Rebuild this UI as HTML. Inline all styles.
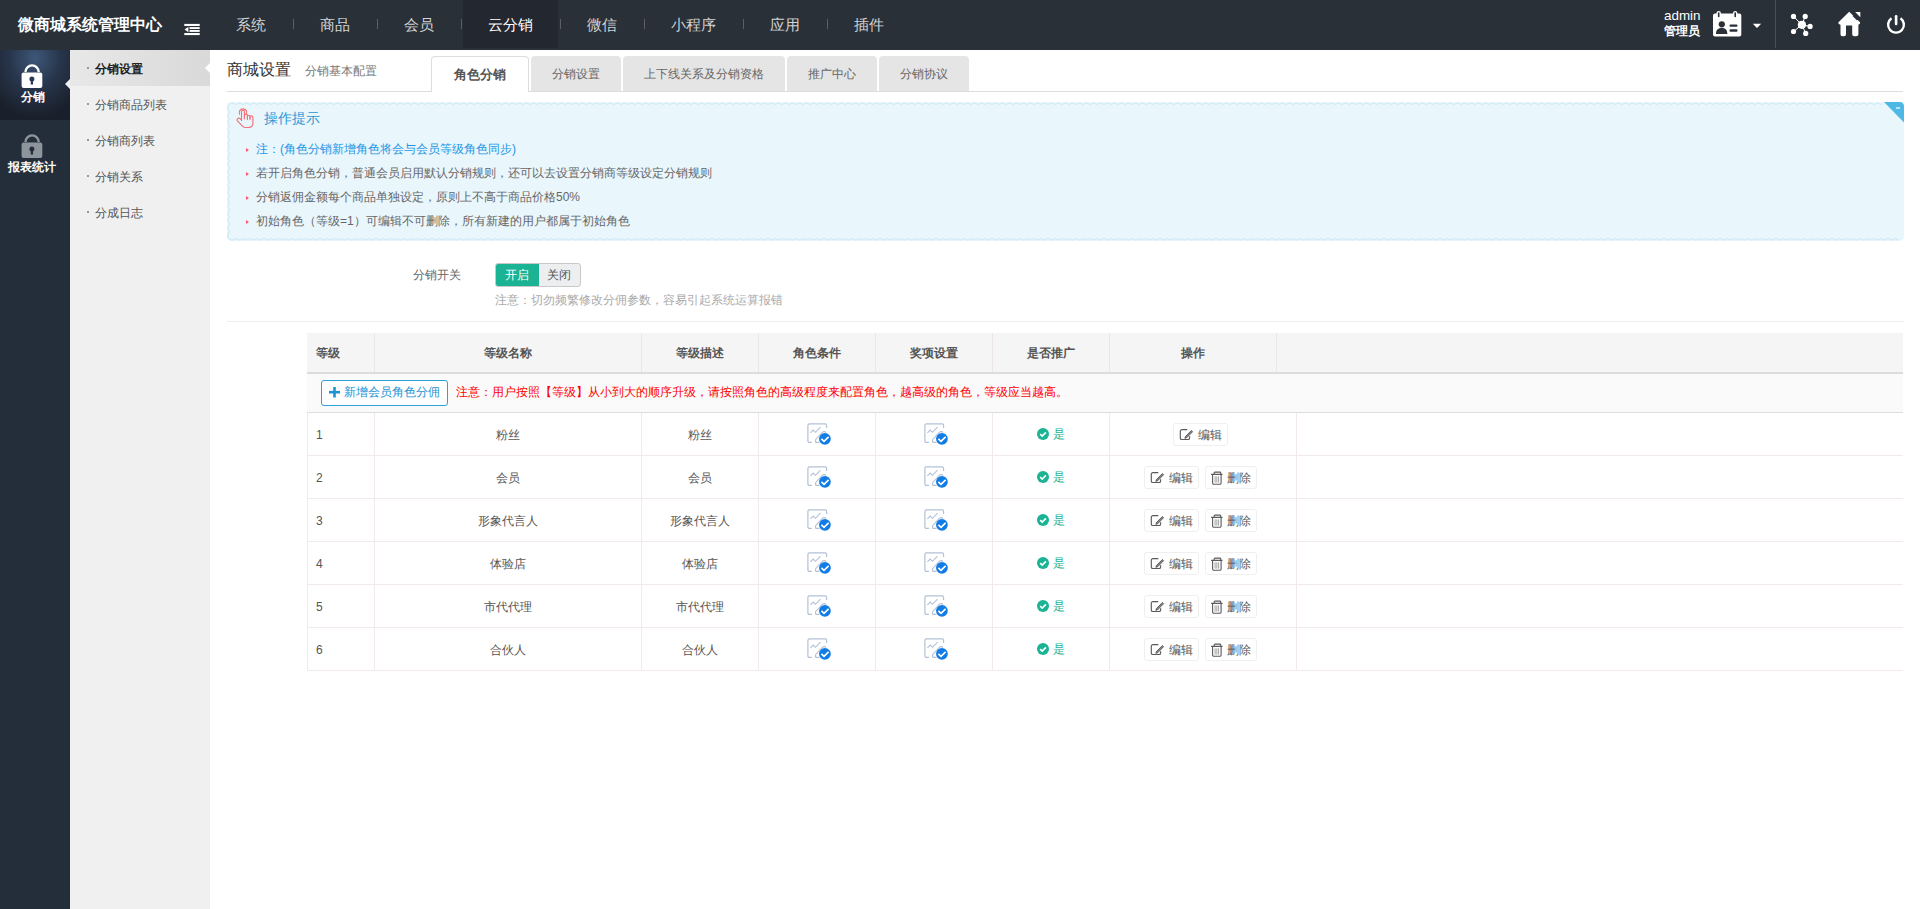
<!DOCTYPE html>
<html><head><meta charset="utf-8">
<style>
*{box-sizing:border-box;margin:0;padding:0}
html,body{width:1920px;height:909px;overflow:hidden;background:#fff;font-family:"Liberation Sans",sans-serif;font-size:12px;color:#555}
.abs{position:absolute}
#top{position:absolute;left:0;top:0;width:1920px;height:50px;background:#293038}
#logo{position:absolute;left:18px;top:14px;font-size:16px;font-weight:bold;color:#fff;line-height:22px;white-space:nowrap}
.nav{position:absolute;top:0;height:50px;line-height:50px;font-size:15px;color:#d2d3d5;text-align:center;padding-right:2px}
.sep{position:absolute;top:19px;width:1px;height:10px;background:#5a5f66}
#side{position:absolute;left:0;top:50px;width:70px;height:859px;background:#242e3b}
#sub{position:absolute;left:70px;top:50px;width:140px;height:859px;background:#f0f0f0}
.si{position:absolute;left:25px;height:36px;line-height:38px;font-size:12px;color:#555;white-space:nowrap}
.dot{position:absolute;left:87px;width:2px;height:2px;background:#999}

.tab{position:absolute;top:56px;height:35px;line-height:37px;font-size:12px;color:#666;background:#e5e5e5;border-radius:4px 4px 0 0;text-align:center;white-space:nowrap}
.tip{position:absolute;left:256px;font-size:12px;line-height:24px;color:#666;white-space:nowrap}
.tri{position:absolute;left:246px;width:0;height:0;border-top:2px solid transparent;border-bottom:2px solid transparent;margin-top:1px;border-left:3px solid #f4606e}
.th{position:absolute;top:333px;height:40px;line-height:40px;font-size:12px;font-weight:bold;color:#555;text-align:center}
.vl{position:absolute;width:1px;background:#f2eaea}
.hl{position:absolute;left:307px;width:1596px;height:1px;background:#f2eaea}
.td{position:absolute;height:43px;line-height:45px;font-size:12px;color:#555;text-align:center;white-space:nowrap}
.btn{position:absolute;height:23px;line-height:21px;border:1px solid #efefef;border-radius:3px;background:#fff;font-size:12px;color:#555;white-space:nowrap}
</style></head><body>
<div id="top">
  <div id="logo">微商城系统管理中心</div>
  <svg class="abs" style="left:184px;top:23px" width="17" height="13" viewBox="0 0 17 13"><rect x="0.3" y="0.9" width="15.4" height="2.1" fill="#fff"/><rect x="5.5" y="4.1" width="10.2" height="1.9" fill="#fff"/><rect x="5.5" y="7" width="10.2" height="1.9" fill="#fff"/><rect x="0.3" y="10" width="15.4" height="2.1" fill="#fff"/><path d="M0.6 6.5 L4.4 3.8 V9.2 Z" fill="#fff"/></svg>
  <div class="abs" style="left:463px;top:0;width:95px;height:48px;background:#232730"></div>
  <div class="nav" style="left:210px;width:83px">系统</div><div class="sep" style="left:293px"></div>
  <div class="nav" style="left:294px;width:83px">商品</div><div class="sep" style="left:377px"></div>
  <div class="nav" style="left:378px;width:83px">会员</div><div class="sep" style="left:461px"></div>
  <div class="nav" style="left:462px;width:98px;color:#fff">云分销</div><div class="sep" style="left:560px"></div>
  <div class="nav" style="left:561px;width:83px">微信</div><div class="sep" style="left:644px"></div>
  <div class="nav" style="left:645px;width:98px">小程序</div><div class="sep" style="left:743px"></div>
  <div class="nav" style="left:744px;width:83px">应用</div><div class="sep" style="left:827px"></div>
  <div class="nav" style="left:828px;width:83px">插件</div>
  <!-- right -->
  <div class="abs" style="left:1664px;top:7px;font-size:13.4px;color:#fff;line-height:17px">admin</div>
  <div class="abs" style="left:1664px;top:23px;font-size:12px;font-weight:bold;color:#fff;line-height:16px">管理员</div>
  <div class="abs" style="left:1775px;top:0;width:1px;height:48px;background:#4a4f57"></div>
  <svg class="abs" style="left:1712px;top:10px" width="30" height="28" viewBox="0 0 30 28">
    <rect x="1" y="3.5" width="28.3" height="23" rx="2" fill="#fff"/>
    <rect x="4.5" y="0.9" width="4.4" height="7.5" rx="2.2" fill="#fff"/><rect x="5.9" y="2.2" width="1.6" height="5" rx=".8" fill="#293038"/>
    <rect x="21" y="0.9" width="4.4" height="7.5" rx="2.2" fill="#fff"/><rect x="22.4" y="2.2" width="1.6" height="5" rx=".8" fill="#293038"/>
    <circle cx="9.8" cy="14.3" r="3.1" fill="#293038"/>
    <path d="M4 23.9 C4 19.5 6.5 18 9.8 18 C13 18 15.3 19.5 15.3 23.9 Z" fill="#293038"/>
    <rect x="17.5" y="14.4" width="8" height="2.3" rx="1" fill="#293038"/><rect x="17.5" y="19.2" width="8" height="2.5" rx="1" fill="#293038"/>
  </svg>
  <svg class="abs" style="left:1752px;top:23px" width="10" height="6" viewBox="0 0 10 6"><path d="M0.8 0.7 H9.2 L5 5 Z" fill="#fff"/></svg>
  <svg class="abs" style="left:1788px;top:12px" width="26" height="26" viewBox="1788 12 26 26">
    <g stroke="#fff" stroke-width="1"><line x1="1801.9" y1="24.8" x2="1793.5" y2="16.4"/><line x1="1801.9" y1="24.8" x2="1805.2" y2="16.4"/><line x1="1801.9" y1="24.8" x2="1810" y2="26.4"/><line x1="1801.9" y1="24.8" x2="1793.5" y2="31.5"/><line x1="1801.9" y1="24.8" x2="1805.7" y2="33.4"/></g>
    <g fill="#fff"><circle cx="1801.9" cy="24.8" r="4.1"/><circle cx="1793.5" cy="16.4" r="2.6"/><circle cx="1805.2" cy="16.4" r="2.6"/><circle cx="1810.1" cy="26.4" r="2.6"/><circle cx="1793.5" cy="31.5" r="2.6"/><circle cx="1805.7" cy="33.4" r="2.6"/></g>
  </svg>
  <svg class="abs" style="left:1836px;top:10px" width="28" height="28" viewBox="1836 10 28 28">
    <path d="M1849.2 11.8 L1860 22.2 Q1861 23.5 1858.4 24.8 V34.6 Q1858.4 36.2 1856.2 36.2 H1854.3 Q1852.2 36.2 1852.2 34.6 V25.6 H1846 V34.6 Q1846 36.2 1844 36.2 H1842.5 Q1840.5 36.2 1840.5 34.6 V24.8 Q1837.5 23.5 1838.5 22.2 Z" fill="#fff"/>
    <path d="M1855.2 12.1 H1860.3 V17.2 Z" fill="#fff"/>
    <line x1="1853" y1="15.5" x2="1857.5" y2="20" stroke="#293038" stroke-width="1.2"/>
  </svg>
  <svg class="abs" style="left:1884px;top:12px" width="24" height="26" viewBox="1884 12 24 26">
    <path d="M1891.5 18.2 A7.9 7.9 0 1 0 1900.5 18.2" fill="none" stroke="#fff" stroke-width="2.4"/>
    <rect x="1894.8" y="15" width="2.6" height="10.3" rx="1.2" fill="#fff"/>
  </svg>
</div>
<div id="side">
  <div class="abs" style="left:0;top:0;width:70px;height:70px;background:radial-gradient(ellipse 52px 60px at 35px 8px,#3e5778 0%,#27354b 50%,#1a202b 100%)"></div>
  <svg class="abs" style="left:21px;top:13px" width="23" height="26" viewBox="0 0 23 26"><path d="M4.5 9 A6.6 6.6 0 0 1 17.7 9" fill="none" stroke="#fff" stroke-width="2.3"/><rect x="0.6" y="9.6" width="20.7" height="15.4" rx="2" fill="#fff"/><circle cx="10.9" cy="15.9" r="2.5" fill="#2a3a52"/><path d="M9.9 16.5 H11.9 L12.1 21.5 H9.7 Z" fill="#2a3a52"/></svg>
  <div class="abs" style="left:1px;top:39px;width:64px;text-align:center;font-size:12px;font-weight:bold;color:#fff;line-height:16px">分销</div>
  <div class="abs" style="left:65px;top:29px;width:0;height:0;border-top:5px solid transparent;border-bottom:5px solid transparent;border-right:5px solid #f0f0f0"></div>
  <svg class="abs" style="left:21px;top:83px" width="23" height="26" viewBox="0 0 23 26"><path d="M4.5 9 A6.6 6.6 0 0 1 17.7 9" fill="none" stroke="#8e949b" stroke-width="2.3"/><rect x="0.6" y="9.6" width="20.7" height="15.4" rx="2" fill="#8e949b"/><circle cx="10.9" cy="15.9" r="2.5" fill="#242e3b"/><path d="M9.9 16.5 H11.9 L12.1 21.5 H9.7 Z" fill="#242e3b"/></svg>
  <div class="abs" style="left:0;top:109px;width:64px;text-align:center;font-size:12px;font-weight:bold;color:#fff;line-height:16px">报表统计</div>
</div>
<div id="sub">
  <div class="abs" style="left:0;top:0;width:140px;height:36px;background:linear-gradient(90deg,#e8e8e8,#d9d9d9)"></div>
  <div class="si" style="top:0;font-weight:bold;color:#222">分销设置</div>
  <div class="si" style="top:36px">分销商品列表</div>
  <div class="si" style="top:72px">分销商列表</div>
  <div class="si" style="top:108px">分销关系</div>
  <div class="si" style="top:144px">分成日志</div>
  <div class="dot" style="left:17px;top:17px"></div><div class="dot" style="left:17px;top:53px"></div><div class="dot" style="left:17px;top:89px"></div><div class="dot" style="left:17px;top:125px"></div><div class="dot" style="left:17px;top:161px"></div>
  <div class="abs" style="left:135px;top:13px;width:0;height:0;border-top:5px solid transparent;border-bottom:5px solid transparent;border-right:5px solid #fff"></div>
</div>

<div id="content">
  <div class="abs" style="left:227px;top:60px;font-size:16px;color:#333;line-height:20px;white-space:nowrap">商城设置</div>
  <div class="abs" style="left:305px;top:63px;font-size:12px;color:#777;line-height:16px;white-space:nowrap">分销基本配置</div>
  <div class="abs" style="left:227px;top:91px;width:1676px;height:1px;background:#ddd"></div>
  <div class="tab" style="left:431px;width:98px;background:#fff;border:1px solid #ddd;border-bottom:none;height:36px;font-size:13px;font-weight:bold;color:#555;line-height:36px">角色分销</div>
  <div class="tab" style="left:531px;width:90px">分销设置</div>
  <div class="tab" style="left:623px;width:162px">上下线关系及分销资格</div>
  <div class="tab" style="left:787px;width:90px">推广中心</div>
  <div class="tab" style="left:879px;width:90px">分销协议</div>

  <svg class="abs" style="left:227px;top:102px" width="1677" height="139" viewBox="0 0 1677 139">
  <defs>
   <pattern id="wt" x="2" y="0" width="7" height="4" patternUnits="userSpaceOnUse"><path d="M0 2.8 Q3.5 -0.6 7 2.8" fill="none" stroke="#d2ebf7" stroke-width="1.3"/></pattern>
   <pattern id="wb" x="2" y="135" width="7" height="4" patternUnits="userSpaceOnUse"><path d="M0 1.2 Q3.5 4.6 7 1.2" fill="none" stroke="#d2ebf7" stroke-width="1.3"/></pattern>
   <pattern id="wl" x="0" y="3" width="4" height="7" patternUnits="userSpaceOnUse"><path d="M2.8 0 Q-0.6 3.5 2.8 7" fill="none" stroke="#d2ebf7" stroke-width="1.3"/></pattern>
  </defs>
  <rect x="0" y="0" width="1677" height="139" rx="5" fill="#e9f6fc"/>
  <rect x="5" y="0" width="1650" height="4" fill="url(#wt)"/>
  <rect x="5" y="135" width="1667" height="4" fill="url(#wb)"/>
  <rect x="0" y="5" width="4" height="129" fill="url(#wl)"/>
  <path d="M0.7 6 Q0.7 0.7 6 0.7" fill="none" stroke="#d2ebf7" stroke-width="1.3"/>
  <path d="M0.7 133 Q0.7 138.3 6 138.3" fill="none" stroke="#d2ebf7" stroke-width="1.3"/>
</svg>
  <svg class="abs" style="left:1884px;top:102px" width="20" height="21" viewBox="0 0 20 21"><path d="M0 0 H15.5 Q20 0 20 4.5 V20.5 Z" fill="#4fb9e6"/><rect x="12" y="5.4" width="4" height="1.2" fill="#fff"/></svg>
  <svg class="abs" style="left:234px;top:105px" width="22" height="25" viewBox="234 105 22 25"><g fill="none" stroke="#f4707a" stroke-width="1.15" stroke-linecap="round" stroke-linejoin="round">
<path d="M239.6 114.3 A3.8 3.8 0 1 1 246.4 114.3"/>
<path d="M241.5 120.5 V111.6 A1.45 1.45 0 0 1 244.4 111.6 V119"/>
<path d="M244.4 116 V115.6 A1.5 1.5 0 0 1 247.4 115.6 V119.4"/>
<path d="M247.4 117 V116.5 A1.3 1.3 0 0 1 250 116.5 V119.6"/>
<path d="M250 118 V117.2 A1.45 1.45 0 0 1 252.9 117.2 V123.3 Q252.9 127.3 248.6 127.5 H246 Q244 127.5 242.7 126.3 L237.4 120.9 Q236.6 119.7 237.6 118.6 Q238.8 117.6 240.2 118.6 L241.5 120"/>
</g></svg>
  <div class="abs" style="left:264px;top:108px;font-size:14px;color:#2b97d4;line-height:20px">操作提示</div>
  <div class="tri" style="top:147px"></div><div class="tip" style="top:137px;color:#1d96e6">注：(角色分销新增角色将会与会员等级角色同步)</div>
  <div class="tri" style="top:171px"></div><div class="tip" style="top:161px">若开启角色分销，普通会员启用默认分销规则，还可以去设置分销商等级设定分销规则</div>
  <div class="tri" style="top:195px"></div><div class="tip" style="top:185px">分销返佣金额每个商品单独设定，原则上不高于商品价格50%</div>
  <div class="tri" style="top:219px"></div><div class="tip" style="top:209px">初始角色（等级=1）可编辑不可删除，所有新建的用户都属于初始角色</div>

  <div class="abs" style="left:413px;top:267px;font-size:12px;color:#666;line-height:16px">分销开关</div>
  <div class="abs" style="left:495px;top:263px;width:86px;height:24px;border:1px solid #c9c9c9;border-radius:3px;background:#eceef0;overflow:hidden">
    <div class="abs" style="left:-1px;top:-1px;width:44px;height:24px;background:#1ab394;border-radius:3px 0 0 3px"></div>
  </div>
  <div class="abs" style="left:505px;top:267px;font-size:12px;color:#fff;line-height:16px">开启</div>
  <div class="abs" style="left:547px;top:267px;font-size:12px;color:#555;line-height:16px">关闭</div>
  <div class="abs" style="left:495px;top:292px;font-size:12px;color:#aaa;line-height:16px;white-space:nowrap">注意：切勿频繁修改分佣参数，容易引起系统运算报错</div>
  <div class="abs" style="left:227px;top:321px;width:1677px;height:1px;background:#eee"></div>
<div class="abs" style="left:307px;top:333px;width:1596px;height:40px;background:#f5f5f5"></div>
<div class="abs" style="left:307px;top:372px;width:1596px;height:2px;background:#dcdcdc"></div>
<div class="vl" style="left:374px;top:333px;height:39px;background:#ede6e6"></div>
<div class="vl" style="left:641px;top:333px;height:39px;background:#ede6e6"></div>
<div class="vl" style="left:758px;top:333px;height:39px;background:#ede6e6"></div>
<div class="vl" style="left:875px;top:333px;height:39px;background:#ede6e6"></div>
<div class="vl" style="left:992px;top:333px;height:39px;background:#ede6e6"></div>
<div class="vl" style="left:1109px;top:333px;height:39px;background:#ede6e6"></div>
<div class="vl" style="left:1276px;top:333px;height:39px;background:#ede6e6"></div>
<div class="th" style="left:316px;text-align:left">等级</div>
<div class="th" style="left:375px;width:266px">等级名称</div>
<div class="th" style="left:642px;width:116px">等级描述</div>
<div class="th" style="left:759px;width:116px">角色条件</div>
<div class="th" style="left:876px;width:116px">奖项设置</div>
<div class="th" style="left:993px;width:116px">是否推广</div>
<div class="th" style="left:1110px;width:166px">操作</div>
<div class="abs" style="left:307px;top:374px;width:1596px;height:38px;background:#fafafa"></div>
<div class="abs" style="left:307px;top:412px;width:1596px;height:1px;background:#ddd"></div>
<div class="abs" style="left:321px;top:380px;width:127px;height:26px;border:1px solid #29a3d8;border-radius:3px;background:#fff"></div>
<svg class="abs" style="left:329px;top:387px" width="11" height="11" viewBox="0 0 11 11"><rect x="4.2" y="0" width="2.6" height="10.5" fill="#1d93d2"/><rect x="0" y="3.9" width="11" height="2.6" fill="#1d93d2"/></svg>
<div class="abs" style="left:344px;top:384px;font-size:12px;color:#1d93d2;line-height:16px;white-space:nowrap">新增会员角色分佣</div>
<div class="abs" style="left:456px;top:384px;font-size:12px;color:#f00;line-height:16px;white-space:nowrap">注意：用户按照【等级】从小到大的顺序升级，请按照角色的高级程度来配置角色，越高级的角色，等级应当越高。</div>
<div class="hl" style="top:455px"></div>
<div class="td" style="left:316px;top:413px;text-align:left">1</div>
<div class="td" style="left:375px;top:413px;width:266px">粉丝</div>
<div class="td" style="left:642px;top:413px;width:116px">粉丝</div>
<svg class="abs" style="left:803px;top:419px" width="28" height="26" viewBox="0 0 28 26"><path d="M23.6 8.9 V6.4 A1.5 1.5 0 0 0 22.1 4.9 H6.4 A1.5 1.5 0 0 0 4.9 6.4 V21.9 A1.5 1.5 0 0 0 6.4 23.4 H8.9" fill="none" stroke="#b3c1d6" stroke-width="1.2"/><path d="M7.4 13.8 L10.2 11 L12.5 13.3 L17.5 8.2" fill="none" stroke="#b3c1d6" stroke-width="1.1"/><path d="M12.6 23.4 V20.6 L19.5 13.2 A2.4 2.4 0 0 1 23 13.6 M12.6 23.4 H16.5" fill="none" stroke="#b3c1d6" stroke-width="1.1"/><circle cx="21.9" cy="19.8" r="5.9" fill="#117ce6"/><path d="M18.4 19.9 L21 22.3 L25.6 17.9" fill="none" stroke="#fff" stroke-width="1.6"/></svg>
<svg class="abs" style="left:920px;top:419px" width="28" height="26" viewBox="0 0 28 26"><path d="M23.6 8.9 V6.4 A1.5 1.5 0 0 0 22.1 4.9 H6.4 A1.5 1.5 0 0 0 4.9 6.4 V21.9 A1.5 1.5 0 0 0 6.4 23.4 H8.9" fill="none" stroke="#b3c1d6" stroke-width="1.2"/><path d="M7.4 13.8 L10.2 11 L12.5 13.3 L17.5 8.2" fill="none" stroke="#b3c1d6" stroke-width="1.1"/><path d="M12.6 23.4 V20.6 L19.5 13.2 A2.4 2.4 0 0 1 23 13.6 M12.6 23.4 H16.5" fill="none" stroke="#b3c1d6" stroke-width="1.1"/><circle cx="21.9" cy="19.8" r="5.9" fill="#117ce6"/><path d="M18.4 19.9 L21 22.3 L25.6 17.9" fill="none" stroke="#fff" stroke-width="1.6"/></svg>
<svg class="abs" style="left:1037px;top:428px" width="12" height="12" viewBox="0 0 12 12"><circle cx="6" cy="6" r="6" fill="#1ab394"/><path d="M3.2 6.1 L5.2 8 L8.9 4.3" fill="none" stroke="#fff" stroke-width="1.7"/></svg>
<div class="abs" style="left:1053px;top:426px;font-size:12px;color:#1ab394;line-height:16px">是</div>
<div class="btn" style="left:1173px;top:423px;width:55px"><svg class="abs" style="left:5px;top:4px" width="15" height="13" viewBox="0 0 15 13"><path d="M8.3 1.6 H2.9 A1.6 1.6 0 0 0 1.3 3.2 V9.9 A1.6 1.6 0 0 0 2.9 11.5 H9 A1.6 1.6 0 0 0 10.6 9.9 V8.2" fill="none" stroke="#5a5a5a" stroke-width="1.15"/><path d="M6.4 8.6 L5.9 10.3 L7.6 9.8 L13.6 3.7 L12.4 2.5 Z" fill="#888" stroke="#555" stroke-width="0.9" stroke-linejoin="round"/></svg><span class="abs" style="left:24px;top:3px;line-height:16px">编辑</span></div>
<div class="hl" style="top:498px"></div>
<div class="td" style="left:316px;top:456px;text-align:left">2</div>
<div class="td" style="left:375px;top:456px;width:266px">会员</div>
<div class="td" style="left:642px;top:456px;width:116px">会员</div>
<svg class="abs" style="left:803px;top:462px" width="28" height="26" viewBox="0 0 28 26"><path d="M23.6 8.9 V6.4 A1.5 1.5 0 0 0 22.1 4.9 H6.4 A1.5 1.5 0 0 0 4.9 6.4 V21.9 A1.5 1.5 0 0 0 6.4 23.4 H8.9" fill="none" stroke="#b3c1d6" stroke-width="1.2"/><path d="M7.4 13.8 L10.2 11 L12.5 13.3 L17.5 8.2" fill="none" stroke="#b3c1d6" stroke-width="1.1"/><path d="M12.6 23.4 V20.6 L19.5 13.2 A2.4 2.4 0 0 1 23 13.6 M12.6 23.4 H16.5" fill="none" stroke="#b3c1d6" stroke-width="1.1"/><circle cx="21.9" cy="19.8" r="5.9" fill="#117ce6"/><path d="M18.4 19.9 L21 22.3 L25.6 17.9" fill="none" stroke="#fff" stroke-width="1.6"/></svg>
<svg class="abs" style="left:920px;top:462px" width="28" height="26" viewBox="0 0 28 26"><path d="M23.6 8.9 V6.4 A1.5 1.5 0 0 0 22.1 4.9 H6.4 A1.5 1.5 0 0 0 4.9 6.4 V21.9 A1.5 1.5 0 0 0 6.4 23.4 H8.9" fill="none" stroke="#b3c1d6" stroke-width="1.2"/><path d="M7.4 13.8 L10.2 11 L12.5 13.3 L17.5 8.2" fill="none" stroke="#b3c1d6" stroke-width="1.1"/><path d="M12.6 23.4 V20.6 L19.5 13.2 A2.4 2.4 0 0 1 23 13.6 M12.6 23.4 H16.5" fill="none" stroke="#b3c1d6" stroke-width="1.1"/><circle cx="21.9" cy="19.8" r="5.9" fill="#117ce6"/><path d="M18.4 19.9 L21 22.3 L25.6 17.9" fill="none" stroke="#fff" stroke-width="1.6"/></svg>
<svg class="abs" style="left:1037px;top:471px" width="12" height="12" viewBox="0 0 12 12"><circle cx="6" cy="6" r="6" fill="#1ab394"/><path d="M3.2 6.1 L5.2 8 L8.9 4.3" fill="none" stroke="#fff" stroke-width="1.7"/></svg>
<div class="abs" style="left:1053px;top:469px;font-size:12px;color:#1ab394;line-height:16px">是</div>
<div class="btn" style="left:1144px;top:466px;width:55px"><svg class="abs" style="left:5px;top:4px" width="15" height="13" viewBox="0 0 15 13"><path d="M8.3 1.6 H2.9 A1.6 1.6 0 0 0 1.3 3.2 V9.9 A1.6 1.6 0 0 0 2.9 11.5 H9 A1.6 1.6 0 0 0 10.6 9.9 V8.2" fill="none" stroke="#5a5a5a" stroke-width="1.15"/><path d="M6.4 8.6 L5.9 10.3 L7.6 9.8 L13.6 3.7 L12.4 2.5 Z" fill="#888" stroke="#555" stroke-width="0.9" stroke-linejoin="round"/></svg><span class="abs" style="left:24px;top:3px;line-height:16px">编辑</span></div>
<div class="btn" style="left:1205px;top:466px;width:52px"><svg class="abs" style="left:4px;top:4px" width="14" height="15" viewBox="0 0 14 15"><path d="M4.2 3 V1.8 Q4.2 1.1 4.9 1.1 H10 Q10.7 1.1 10.7 1.8 V3 M1.1 3.4 H12.5 M2.6 3.4 V12 A1.2 1.2 0 0 0 3.8 13.2 H9.9 A1.2 1.2 0 0 0 11.1 12 V3.4" fill="none" stroke="#5a5a5a" stroke-width="1.1"/><path d="M5.1 5.3 V11.6 M6.85 5.3 V11.6 M8.6 5.3 V11.6" fill="none" stroke="#999" stroke-width="0.9"/></svg><span class="abs" style="left:21px;top:3px;line-height:16px">删除</span></div>
<div class="hl" style="top:541px"></div>
<div class="td" style="left:316px;top:499px;text-align:left">3</div>
<div class="td" style="left:375px;top:499px;width:266px">形象代言人</div>
<div class="td" style="left:642px;top:499px;width:116px">形象代言人</div>
<svg class="abs" style="left:803px;top:505px" width="28" height="26" viewBox="0 0 28 26"><path d="M23.6 8.9 V6.4 A1.5 1.5 0 0 0 22.1 4.9 H6.4 A1.5 1.5 0 0 0 4.9 6.4 V21.9 A1.5 1.5 0 0 0 6.4 23.4 H8.9" fill="none" stroke="#b3c1d6" stroke-width="1.2"/><path d="M7.4 13.8 L10.2 11 L12.5 13.3 L17.5 8.2" fill="none" stroke="#b3c1d6" stroke-width="1.1"/><path d="M12.6 23.4 V20.6 L19.5 13.2 A2.4 2.4 0 0 1 23 13.6 M12.6 23.4 H16.5" fill="none" stroke="#b3c1d6" stroke-width="1.1"/><circle cx="21.9" cy="19.8" r="5.9" fill="#117ce6"/><path d="M18.4 19.9 L21 22.3 L25.6 17.9" fill="none" stroke="#fff" stroke-width="1.6"/></svg>
<svg class="abs" style="left:920px;top:505px" width="28" height="26" viewBox="0 0 28 26"><path d="M23.6 8.9 V6.4 A1.5 1.5 0 0 0 22.1 4.9 H6.4 A1.5 1.5 0 0 0 4.9 6.4 V21.9 A1.5 1.5 0 0 0 6.4 23.4 H8.9" fill="none" stroke="#b3c1d6" stroke-width="1.2"/><path d="M7.4 13.8 L10.2 11 L12.5 13.3 L17.5 8.2" fill="none" stroke="#b3c1d6" stroke-width="1.1"/><path d="M12.6 23.4 V20.6 L19.5 13.2 A2.4 2.4 0 0 1 23 13.6 M12.6 23.4 H16.5" fill="none" stroke="#b3c1d6" stroke-width="1.1"/><circle cx="21.9" cy="19.8" r="5.9" fill="#117ce6"/><path d="M18.4 19.9 L21 22.3 L25.6 17.9" fill="none" stroke="#fff" stroke-width="1.6"/></svg>
<svg class="abs" style="left:1037px;top:514px" width="12" height="12" viewBox="0 0 12 12"><circle cx="6" cy="6" r="6" fill="#1ab394"/><path d="M3.2 6.1 L5.2 8 L8.9 4.3" fill="none" stroke="#fff" stroke-width="1.7"/></svg>
<div class="abs" style="left:1053px;top:512px;font-size:12px;color:#1ab394;line-height:16px">是</div>
<div class="btn" style="left:1144px;top:509px;width:55px"><svg class="abs" style="left:5px;top:4px" width="15" height="13" viewBox="0 0 15 13"><path d="M8.3 1.6 H2.9 A1.6 1.6 0 0 0 1.3 3.2 V9.9 A1.6 1.6 0 0 0 2.9 11.5 H9 A1.6 1.6 0 0 0 10.6 9.9 V8.2" fill="none" stroke="#5a5a5a" stroke-width="1.15"/><path d="M6.4 8.6 L5.9 10.3 L7.6 9.8 L13.6 3.7 L12.4 2.5 Z" fill="#888" stroke="#555" stroke-width="0.9" stroke-linejoin="round"/></svg><span class="abs" style="left:24px;top:3px;line-height:16px">编辑</span></div>
<div class="btn" style="left:1205px;top:509px;width:52px"><svg class="abs" style="left:4px;top:4px" width="14" height="15" viewBox="0 0 14 15"><path d="M4.2 3 V1.8 Q4.2 1.1 4.9 1.1 H10 Q10.7 1.1 10.7 1.8 V3 M1.1 3.4 H12.5 M2.6 3.4 V12 A1.2 1.2 0 0 0 3.8 13.2 H9.9 A1.2 1.2 0 0 0 11.1 12 V3.4" fill="none" stroke="#5a5a5a" stroke-width="1.1"/><path d="M5.1 5.3 V11.6 M6.85 5.3 V11.6 M8.6 5.3 V11.6" fill="none" stroke="#999" stroke-width="0.9"/></svg><span class="abs" style="left:21px;top:3px;line-height:16px">删除</span></div>
<div class="hl" style="top:584px"></div>
<div class="td" style="left:316px;top:542px;text-align:left">4</div>
<div class="td" style="left:375px;top:542px;width:266px">体验店</div>
<div class="td" style="left:642px;top:542px;width:116px">体验店</div>
<svg class="abs" style="left:803px;top:548px" width="28" height="26" viewBox="0 0 28 26"><path d="M23.6 8.9 V6.4 A1.5 1.5 0 0 0 22.1 4.9 H6.4 A1.5 1.5 0 0 0 4.9 6.4 V21.9 A1.5 1.5 0 0 0 6.4 23.4 H8.9" fill="none" stroke="#b3c1d6" stroke-width="1.2"/><path d="M7.4 13.8 L10.2 11 L12.5 13.3 L17.5 8.2" fill="none" stroke="#b3c1d6" stroke-width="1.1"/><path d="M12.6 23.4 V20.6 L19.5 13.2 A2.4 2.4 0 0 1 23 13.6 M12.6 23.4 H16.5" fill="none" stroke="#b3c1d6" stroke-width="1.1"/><circle cx="21.9" cy="19.8" r="5.9" fill="#117ce6"/><path d="M18.4 19.9 L21 22.3 L25.6 17.9" fill="none" stroke="#fff" stroke-width="1.6"/></svg>
<svg class="abs" style="left:920px;top:548px" width="28" height="26" viewBox="0 0 28 26"><path d="M23.6 8.9 V6.4 A1.5 1.5 0 0 0 22.1 4.9 H6.4 A1.5 1.5 0 0 0 4.9 6.4 V21.9 A1.5 1.5 0 0 0 6.4 23.4 H8.9" fill="none" stroke="#b3c1d6" stroke-width="1.2"/><path d="M7.4 13.8 L10.2 11 L12.5 13.3 L17.5 8.2" fill="none" stroke="#b3c1d6" stroke-width="1.1"/><path d="M12.6 23.4 V20.6 L19.5 13.2 A2.4 2.4 0 0 1 23 13.6 M12.6 23.4 H16.5" fill="none" stroke="#b3c1d6" stroke-width="1.1"/><circle cx="21.9" cy="19.8" r="5.9" fill="#117ce6"/><path d="M18.4 19.9 L21 22.3 L25.6 17.9" fill="none" stroke="#fff" stroke-width="1.6"/></svg>
<svg class="abs" style="left:1037px;top:557px" width="12" height="12" viewBox="0 0 12 12"><circle cx="6" cy="6" r="6" fill="#1ab394"/><path d="M3.2 6.1 L5.2 8 L8.9 4.3" fill="none" stroke="#fff" stroke-width="1.7"/></svg>
<div class="abs" style="left:1053px;top:555px;font-size:12px;color:#1ab394;line-height:16px">是</div>
<div class="btn" style="left:1144px;top:552px;width:55px"><svg class="abs" style="left:5px;top:4px" width="15" height="13" viewBox="0 0 15 13"><path d="M8.3 1.6 H2.9 A1.6 1.6 0 0 0 1.3 3.2 V9.9 A1.6 1.6 0 0 0 2.9 11.5 H9 A1.6 1.6 0 0 0 10.6 9.9 V8.2" fill="none" stroke="#5a5a5a" stroke-width="1.15"/><path d="M6.4 8.6 L5.9 10.3 L7.6 9.8 L13.6 3.7 L12.4 2.5 Z" fill="#888" stroke="#555" stroke-width="0.9" stroke-linejoin="round"/></svg><span class="abs" style="left:24px;top:3px;line-height:16px">编辑</span></div>
<div class="btn" style="left:1205px;top:552px;width:52px"><svg class="abs" style="left:4px;top:4px" width="14" height="15" viewBox="0 0 14 15"><path d="M4.2 3 V1.8 Q4.2 1.1 4.9 1.1 H10 Q10.7 1.1 10.7 1.8 V3 M1.1 3.4 H12.5 M2.6 3.4 V12 A1.2 1.2 0 0 0 3.8 13.2 H9.9 A1.2 1.2 0 0 0 11.1 12 V3.4" fill="none" stroke="#5a5a5a" stroke-width="1.1"/><path d="M5.1 5.3 V11.6 M6.85 5.3 V11.6 M8.6 5.3 V11.6" fill="none" stroke="#999" stroke-width="0.9"/></svg><span class="abs" style="left:21px;top:3px;line-height:16px">删除</span></div>
<div class="hl" style="top:627px"></div>
<div class="td" style="left:316px;top:585px;text-align:left">5</div>
<div class="td" style="left:375px;top:585px;width:266px">市代代理</div>
<div class="td" style="left:642px;top:585px;width:116px">市代代理</div>
<svg class="abs" style="left:803px;top:591px" width="28" height="26" viewBox="0 0 28 26"><path d="M23.6 8.9 V6.4 A1.5 1.5 0 0 0 22.1 4.9 H6.4 A1.5 1.5 0 0 0 4.9 6.4 V21.9 A1.5 1.5 0 0 0 6.4 23.4 H8.9" fill="none" stroke="#b3c1d6" stroke-width="1.2"/><path d="M7.4 13.8 L10.2 11 L12.5 13.3 L17.5 8.2" fill="none" stroke="#b3c1d6" stroke-width="1.1"/><path d="M12.6 23.4 V20.6 L19.5 13.2 A2.4 2.4 0 0 1 23 13.6 M12.6 23.4 H16.5" fill="none" stroke="#b3c1d6" stroke-width="1.1"/><circle cx="21.9" cy="19.8" r="5.9" fill="#117ce6"/><path d="M18.4 19.9 L21 22.3 L25.6 17.9" fill="none" stroke="#fff" stroke-width="1.6"/></svg>
<svg class="abs" style="left:920px;top:591px" width="28" height="26" viewBox="0 0 28 26"><path d="M23.6 8.9 V6.4 A1.5 1.5 0 0 0 22.1 4.9 H6.4 A1.5 1.5 0 0 0 4.9 6.4 V21.9 A1.5 1.5 0 0 0 6.4 23.4 H8.9" fill="none" stroke="#b3c1d6" stroke-width="1.2"/><path d="M7.4 13.8 L10.2 11 L12.5 13.3 L17.5 8.2" fill="none" stroke="#b3c1d6" stroke-width="1.1"/><path d="M12.6 23.4 V20.6 L19.5 13.2 A2.4 2.4 0 0 1 23 13.6 M12.6 23.4 H16.5" fill="none" stroke="#b3c1d6" stroke-width="1.1"/><circle cx="21.9" cy="19.8" r="5.9" fill="#117ce6"/><path d="M18.4 19.9 L21 22.3 L25.6 17.9" fill="none" stroke="#fff" stroke-width="1.6"/></svg>
<svg class="abs" style="left:1037px;top:600px" width="12" height="12" viewBox="0 0 12 12"><circle cx="6" cy="6" r="6" fill="#1ab394"/><path d="M3.2 6.1 L5.2 8 L8.9 4.3" fill="none" stroke="#fff" stroke-width="1.7"/></svg>
<div class="abs" style="left:1053px;top:598px;font-size:12px;color:#1ab394;line-height:16px">是</div>
<div class="btn" style="left:1144px;top:595px;width:55px"><svg class="abs" style="left:5px;top:4px" width="15" height="13" viewBox="0 0 15 13"><path d="M8.3 1.6 H2.9 A1.6 1.6 0 0 0 1.3 3.2 V9.9 A1.6 1.6 0 0 0 2.9 11.5 H9 A1.6 1.6 0 0 0 10.6 9.9 V8.2" fill="none" stroke="#5a5a5a" stroke-width="1.15"/><path d="M6.4 8.6 L5.9 10.3 L7.6 9.8 L13.6 3.7 L12.4 2.5 Z" fill="#888" stroke="#555" stroke-width="0.9" stroke-linejoin="round"/></svg><span class="abs" style="left:24px;top:3px;line-height:16px">编辑</span></div>
<div class="btn" style="left:1205px;top:595px;width:52px"><svg class="abs" style="left:4px;top:4px" width="14" height="15" viewBox="0 0 14 15"><path d="M4.2 3 V1.8 Q4.2 1.1 4.9 1.1 H10 Q10.7 1.1 10.7 1.8 V3 M1.1 3.4 H12.5 M2.6 3.4 V12 A1.2 1.2 0 0 0 3.8 13.2 H9.9 A1.2 1.2 0 0 0 11.1 12 V3.4" fill="none" stroke="#5a5a5a" stroke-width="1.1"/><path d="M5.1 5.3 V11.6 M6.85 5.3 V11.6 M8.6 5.3 V11.6" fill="none" stroke="#999" stroke-width="0.9"/></svg><span class="abs" style="left:21px;top:3px;line-height:16px">删除</span></div>
<div class="hl" style="top:670px"></div>
<div class="td" style="left:316px;top:628px;text-align:left">6</div>
<div class="td" style="left:375px;top:628px;width:266px">合伙人</div>
<div class="td" style="left:642px;top:628px;width:116px">合伙人</div>
<svg class="abs" style="left:803px;top:634px" width="28" height="26" viewBox="0 0 28 26"><path d="M23.6 8.9 V6.4 A1.5 1.5 0 0 0 22.1 4.9 H6.4 A1.5 1.5 0 0 0 4.9 6.4 V21.9 A1.5 1.5 0 0 0 6.4 23.4 H8.9" fill="none" stroke="#b3c1d6" stroke-width="1.2"/><path d="M7.4 13.8 L10.2 11 L12.5 13.3 L17.5 8.2" fill="none" stroke="#b3c1d6" stroke-width="1.1"/><path d="M12.6 23.4 V20.6 L19.5 13.2 A2.4 2.4 0 0 1 23 13.6 M12.6 23.4 H16.5" fill="none" stroke="#b3c1d6" stroke-width="1.1"/><circle cx="21.9" cy="19.8" r="5.9" fill="#117ce6"/><path d="M18.4 19.9 L21 22.3 L25.6 17.9" fill="none" stroke="#fff" stroke-width="1.6"/></svg>
<svg class="abs" style="left:920px;top:634px" width="28" height="26" viewBox="0 0 28 26"><path d="M23.6 8.9 V6.4 A1.5 1.5 0 0 0 22.1 4.9 H6.4 A1.5 1.5 0 0 0 4.9 6.4 V21.9 A1.5 1.5 0 0 0 6.4 23.4 H8.9" fill="none" stroke="#b3c1d6" stroke-width="1.2"/><path d="M7.4 13.8 L10.2 11 L12.5 13.3 L17.5 8.2" fill="none" stroke="#b3c1d6" stroke-width="1.1"/><path d="M12.6 23.4 V20.6 L19.5 13.2 A2.4 2.4 0 0 1 23 13.6 M12.6 23.4 H16.5" fill="none" stroke="#b3c1d6" stroke-width="1.1"/><circle cx="21.9" cy="19.8" r="5.9" fill="#117ce6"/><path d="M18.4 19.9 L21 22.3 L25.6 17.9" fill="none" stroke="#fff" stroke-width="1.6"/></svg>
<svg class="abs" style="left:1037px;top:643px" width="12" height="12" viewBox="0 0 12 12"><circle cx="6" cy="6" r="6" fill="#1ab394"/><path d="M3.2 6.1 L5.2 8 L8.9 4.3" fill="none" stroke="#fff" stroke-width="1.7"/></svg>
<div class="abs" style="left:1053px;top:641px;font-size:12px;color:#1ab394;line-height:16px">是</div>
<div class="btn" style="left:1144px;top:638px;width:55px"><svg class="abs" style="left:5px;top:4px" width="15" height="13" viewBox="0 0 15 13"><path d="M8.3 1.6 H2.9 A1.6 1.6 0 0 0 1.3 3.2 V9.9 A1.6 1.6 0 0 0 2.9 11.5 H9 A1.6 1.6 0 0 0 10.6 9.9 V8.2" fill="none" stroke="#5a5a5a" stroke-width="1.15"/><path d="M6.4 8.6 L5.9 10.3 L7.6 9.8 L13.6 3.7 L12.4 2.5 Z" fill="#888" stroke="#555" stroke-width="0.9" stroke-linejoin="round"/></svg><span class="abs" style="left:24px;top:3px;line-height:16px">编辑</span></div>
<div class="btn" style="left:1205px;top:638px;width:52px"><svg class="abs" style="left:4px;top:4px" width="14" height="15" viewBox="0 0 14 15"><path d="M4.2 3 V1.8 Q4.2 1.1 4.9 1.1 H10 Q10.7 1.1 10.7 1.8 V3 M1.1 3.4 H12.5 M2.6 3.4 V12 A1.2 1.2 0 0 0 3.8 13.2 H9.9 A1.2 1.2 0 0 0 11.1 12 V3.4" fill="none" stroke="#5a5a5a" stroke-width="1.1"/><path d="M5.1 5.3 V11.6 M6.85 5.3 V11.6 M8.6 5.3 V11.6" fill="none" stroke="#999" stroke-width="0.9"/></svg><span class="abs" style="left:21px;top:3px;line-height:16px">删除</span></div>
<div class="vl" style="left:307px;top:413px;height:257px"></div>
<div class="vl" style="left:374px;top:413px;height:257px"></div>
<div class="vl" style="left:641px;top:413px;height:257px"></div>
<div class="vl" style="left:758px;top:413px;height:257px"></div>
<div class="vl" style="left:875px;top:413px;height:257px"></div>
<div class="vl" style="left:992px;top:413px;height:257px"></div>
<div class="vl" style="left:1109px;top:413px;height:257px"></div>
<div class="vl" style="left:1296px;top:413px;height:257px"></div>
</div>
</body></html>
